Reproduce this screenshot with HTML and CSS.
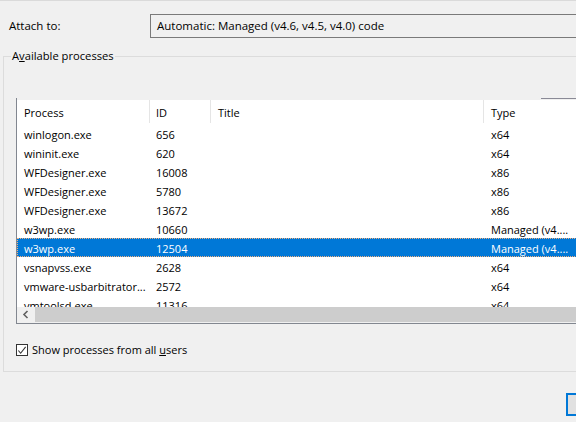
FILE: index.html
```
<!DOCTYPE html>
<html>
<head>
<meta charset="utf-8">
<link rel="stylesheet" href="styles.css">
</head>
<body>
<div class="topline"></div>
<div class="attach">
  <span class="attach-label">Attach to:</span>
  <div class="combo">Automatic: Managed (v4.6, v4.5, v4.0) code</div>
</div>
<fieldset class="group">
  <legend class="legend">A<u>v</u>ailable processes</legend>
  <div class="list">
    <div class="row head">
      <div class="cell">Process</div>
      <div class="cell">ID</div>
      <div class="cell">Title</div>
      <div class="cell">Type</div>
    </div>
    <div class="rows">
      <div class="row"><div class="cell">winlogon.exe</div><div class="cell">656</div><div class="cell"></div><div class="cell">x64</div></div>
      <div class="row"><div class="cell">wininit.exe</div><div class="cell">620</div><div class="cell"></div><div class="cell">x64</div></div>
      <div class="row"><div class="cell">WFDesigner.exe</div><div class="cell">16008</div><div class="cell"></div><div class="cell">x86</div></div>
      <div class="row"><div class="cell">WFDesigner.exe</div><div class="cell">5780</div><div class="cell"></div><div class="cell">x86</div></div>
      <div class="row"><div class="cell">WFDesigner.exe</div><div class="cell">13672</div><div class="cell"></div><div class="cell">x86</div></div>
      <div class="row"><div class="cell">w3wp.exe</div><div class="cell">10660</div><div class="cell"></div><div class="cell">Managed (v4....</div></div>
      <div class="row sel"><div class="cell">w3wp.exe</div><div class="cell">12504</div><div class="cell"></div><div class="cell">Managed (v4....</div></div>
      <div class="row"><div class="cell">vsnapvss.exe</div><div class="cell">2628</div><div class="cell"></div><div class="cell">x64</div></div>
      <div class="row"><div class="cell">vmware-usbarbitrator...</div><div class="cell">2572</div><div class="cell"></div><div class="cell">x64</div></div>
      <div class="row"><div class="cell">vmtoolsd.exe</div><div class="cell">11316</div><div class="cell"></div><div class="cell">x64</div></div>
    </div>
    <div class="hscroll">
      <div class="arrow"><svg width="8" height="9" viewBox="0 0 8 9"><polyline points="5.5,1 2,4.5 5.5,8" fill="none" stroke="#606060" stroke-width="1.6"/></svg></div>
      <div class="thumb"></div>
    </div>
  </div>
  <label class="check">
    <span class="box"><svg width="11" height="11" viewBox="0 0 11 11"><polyline points="1.5,5.5 4,8.5 9.5,1.5" fill="none" stroke="#333" stroke-width="1.2"/></svg></span>
    <span>Show processes from all <u>u</u>sers</span>
  </label>
</fieldset>
<div class="buttons">
  <div class="btn"></div>
</div>
</body>
</html>
```
FILE: styles.css
```
html, body {
  margin: 0;
  padding: 0;
  background: #f0f0f0;
  overflow: hidden;
  width: 576px;
  height: 422px;
}
body {
  font-family: "Open Sans", "Noto Sans", sans-serif;
  font-size: 11px;
  color: #000;
}
.topline {
  height: 1px;
  background: #dadada;
}
.attach {
  display: flex;
  align-items: center;
  margin-top: 13px;
  height: 24px;
  font-size: 11.5px;
}
.attach-label {
  flex: none;
  box-sizing: border-box;
  width: 150px;
  padding-left: 9px;
  line-height: 24px;
}
.combo {
  box-sizing: border-box;
  height: 24px;
  width: 460px;
  flex: none;
  border: 1px solid #7a7a7a;
  background: #f0f0f0;
  padding-left: 6px;
  line-height: 22px;
}
.group {
  box-sizing: border-box;
  margin: 11px 0 0 3px;
  padding: 0 0 0 12px;
  width: 640px;
  height: 323px;
  border: 1px solid #dcdcdc;
  min-inline-size: 0;
}
.legend {
  padding: 0 1px;
  margin-left: -5px;
  line-height: 14px;
  height: 14px;
  font-size: 11.2px;
}
.list {
  position: relative;
  margin-top: 35px;
  width: 620px;
  border-left: 1px solid #828790;
  border-bottom: 1px solid #828790;
  padding-top: 2px;
}
.list::before {
  content: "";
  position: absolute;
  top: 0;
  left: 524px;
  right: 0;
  height: 1px;
  background: #8a8a96;
}
.row {
  display: grid;
  grid-template-columns: 133px 61px 273px 153px;
  height: 19px;
  background: #fff;
}
.cell {
  box-sizing: border-box;
  height: 19px;
  padding: 1px 0 0 7px;
  line-height: 19px;
  white-space: nowrap;
  overflow: hidden;
}
.cell:nth-child(2) {
  padding-left: 6px;
}
.head {
  height: 24px;
}
.head .cell {
  box-shadow: inset -1px 0 0 #e5e5e5;
  height: 23px;
  line-height: 23px;
}
.rows {
  height: 183px;
  overflow: hidden;
  background: #fff;
}
.sel {
  background: #0078d7;
  color: #fff;
  outline: 1px dotted #f0b080;
  outline-offset: -1px;
}
.hscroll {
  display: flex;
  height: 16px;
  background: #f0f0f0;
}
.arrow {
  width: 17px;
  height: 15px;
  display: flex;
  align-items: center;
  justify-content: center;
}
.thumb {
  flex: 1;
  height: 15px;
  background: #cdcdcd;
  margin-left: 1px;
}
.check {
  display: flex;
  align-items: center;
  gap: 4px;
  margin-top: 19px;
  margin-left: 0;
  height: 14px;
  line-height: 14px;
}
.box {
  box-sizing: border-box;
  width: 12px;
  height: 12px;
  border: 1px solid #333;
  background: #fff;
  display: flex;
  align-items: center;
  justify-content: center;
}
.box svg {
  display: block;
}
.buttons {
  display: flex;
  padding-left: 566px;
  margin-top: 21px;
}
.btn {
  flex: none;
  box-sizing: border-box;
  width: 75px;
  height: 23px;
  border: 2px solid #0078d7;
  background: #e1e1e1;
}
```
